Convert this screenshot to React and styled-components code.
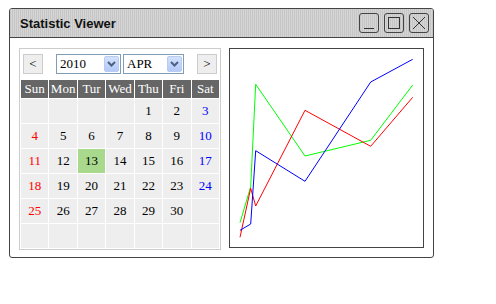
import React from "react";
import styled, { createGlobalStyle } from "styled-components";

const GlobalStyle = createGlobalStyle`
  body {
    margin: 0;
    background: #fff;
  }
`;

const Page = styled.div`
  padding: 8px 0 0 9px;
`;

const Window = styled.div`
  box-sizing: border-box;
  width: 425px;
  height: 250px;
  border: 1px solid #444;
  border-radius: 3px;
  background: #fff;
  display: flex;
  flex-direction: column;
`;

const TitleBar = styled.div`
  height: 28px;
  flex: none;
  display: flex;
  align-items: center;
  justify-content: space-between;
  padding: 0 4px 0 10px;
  border-bottom: 1px solid #444;
  border-radius: 2px 2px 0 0;
  background: repeating-linear-gradient(90deg, #c6c6c6 0 1px, #d5d5d5 1px 2px);
`;

const Title = styled.div`
  font-family: "Liberation Sans", Arial, sans-serif;
  font-weight: bold;
  font-size: 13px;
  color: #111;
`;

const WinButtons = styled.div`
  display: flex;
  gap: 5px;
`;

const WinButton = styled.div`
  box-sizing: border-box;
  width: 20px;
  height: 20px;
  border: 1px solid #444;
  border-radius: 3px;
  display: flex;
  align-items: center;
  justify-content: center;
`;

const Body = styled.div`
  display: flex;
  gap: 8px;
  padding: 10px 9px 8px 9px;
`;

const CalendarPanel = styled.div`
  box-sizing: border-box;
  width: 202px;
  border: 1px solid #ccc;
  padding-top: 5px;
  background: #fff;
`;

const NavRow = styled.div`
  display: flex;
  align-items: center;
  justify-content: space-between;
  padding: 0 3px;
  height: 20px;
`;

const NavButton = styled.div`
  box-sizing: border-box;
  width: 20px;
  height: 20px;
  border: 1px solid #ccc;
  background: #eee;
  font-family: "Liberation Serif", "Times New Roman", serif;
  font-size: 13px;
  display: flex;
  align-items: center;
  justify-content: center;
  color: #000;
`;

const Selects = styled.div`
  display: flex;
  gap: 2px;
`;

const SelectBox = styled.div`
  box-sizing: border-box;
  width: ${({ $width }) => $width}px;
  height: 20px;
  border: 1px solid #7f9db9;
  background: #fff;
  display: flex;
  align-items: center;
  justify-content: space-between;
  padding: 0 1px 0 3px;
  font-family: "Liberation Serif", "Times New Roman", serif;
  font-size: 13px;
  color: #000;
`;

const SelectArrow = styled.div`
  box-sizing: border-box;
  width: 15px;
  height: 16px;
  border: 1px solid #b8cbf2;
  border-radius: 2px;
  background: linear-gradient(#d4e1fc, #b3c9f7);
  display: flex;
  align-items: center;
  justify-content: center;
`;

const Table = styled.table`
  margin-top: 5px;
  width: 100%;
  border-spacing: 1px;
  table-layout: fixed;
  font-family: "Liberation Serif", "Times New Roman", serif;
`;

const HeadCell = styled.th`
  height: 18px;
  padding: 0;
  background: #666;
  color: #fff;
  font-weight: normal;
  font-size: 13px;
`;

const DayCell = styled.td`
  height: 24px;
  padding: 0;
  text-align: center;
  font-size: 13px;
  background: ${({ $today }) => ($today ? "#a8d98c" : "#eee")};
  color: ${({ $col }) => ($col === 0 ? "#ff0000" : $col === 6 ? "#0000ff" : "#000")};
`;

const ChartBox = styled.div`
  box-sizing: border-box;
  width: 195px;
  height: 200px;
  border: 1px solid #444;
  background: #fff;
`;

const days = ["Sun", "Mon", "Tur", "Wed", "Thu", "Fri", "Sat"];

// April 2010 starts on a Thursday
const weeks = [];
{
  let cells = [null, null, null, null];
  for (let d = 1; d <= 30; d++) cells.push(d);
  while (cells.length < 42) cells.push(null);
  for (let i = 0; i < 6; i++) weeks.push(cells.slice(i * 7, i * 7 + 7));
}

const series = [
  { color: "#00ff00", pts: "10,173.7 20.7,137.7 25.7,35.3 75,107 140.7,91.3 182.7,36" },
  { color: "#ff0000", pts: "10,188.3 20.7,139.3 25.7,157 75,61.3 140.7,97.3 182.7,48.3" },
  { color: "#0000ff", pts: "10,181.3 20.7,175 25.7,101.7 75,132.3 140.7,33 182.7,10.3" },
];

const Chevron = () => (
  <svg width="9" height="6" viewBox="0 0 9 6">
    <path d="M1 1 L4.5 4.5 L8 1" fill="none" stroke="#4d6185" strokeWidth="2" />
  </svg>
);

const App = () => {
  return (
    <Page>
      <GlobalStyle />
      <Window>
        <TitleBar>
          <Title>Statistic Viewer</Title>
          <WinButtons>
            <WinButton>
              <svg width="18" height="18" viewBox="0 0 18 18">
                <path d="M4 14.5 H14" stroke="#333" strokeWidth="1" />
              </svg>
            </WinButton>
            <WinButton>
              <svg width="18" height="18" viewBox="0 0 18 18">
                <rect x="3.5" y="3.5" width="11" height="11" fill="none" stroke="#333" />
              </svg>
            </WinButton>
            <WinButton>
              <svg width="18" height="18" viewBox="0 0 18 18">
                <path d="M3 3 L15 15 M15 3 L3 15" stroke="#333" strokeWidth="1" />
              </svg>
            </WinButton>
          </WinButtons>
        </TitleBar>
        <Body>
          <CalendarPanel>
            <NavRow>
              <NavButton>&lt;</NavButton>
              <Selects>
                <SelectBox $width={65}>
                  <span>2010</span>
                  <SelectArrow>
                    <Chevron />
                  </SelectArrow>
                </SelectBox>
                <SelectBox $width={61}>
                  <span>APR</span>
                  <SelectArrow>
                    <Chevron />
                  </SelectArrow>
                </SelectBox>
              </Selects>
              <NavButton>&gt;</NavButton>
            </NavRow>
            <Table>
              <thead>
                <tr>
                  {days.map((d) => (
                    <HeadCell key={d}>{d}</HeadCell>
                  ))}
                </tr>
              </thead>
              <tbody>
                {weeks.map((week, i) => (
                  <tr key={i}>
                    {week.map((d, j) => (
                      <DayCell key={j} $col={j} $today={d === 13}>
                        {d}
                      </DayCell>
                    ))}
                  </tr>
                ))}
              </tbody>
            </Table>
          </CalendarPanel>
          <ChartBox>
            <svg width="193" height="198" viewBox="0 0 193 198">
              {series.map((s) => (
                <polyline key={s.color} points={s.pts} fill="none" stroke={s.color} strokeWidth="1" />
              ))}
            </svg>
          </ChartBox>
        </Body>
      </Window>
    </Page>
  );
};

export default App;
